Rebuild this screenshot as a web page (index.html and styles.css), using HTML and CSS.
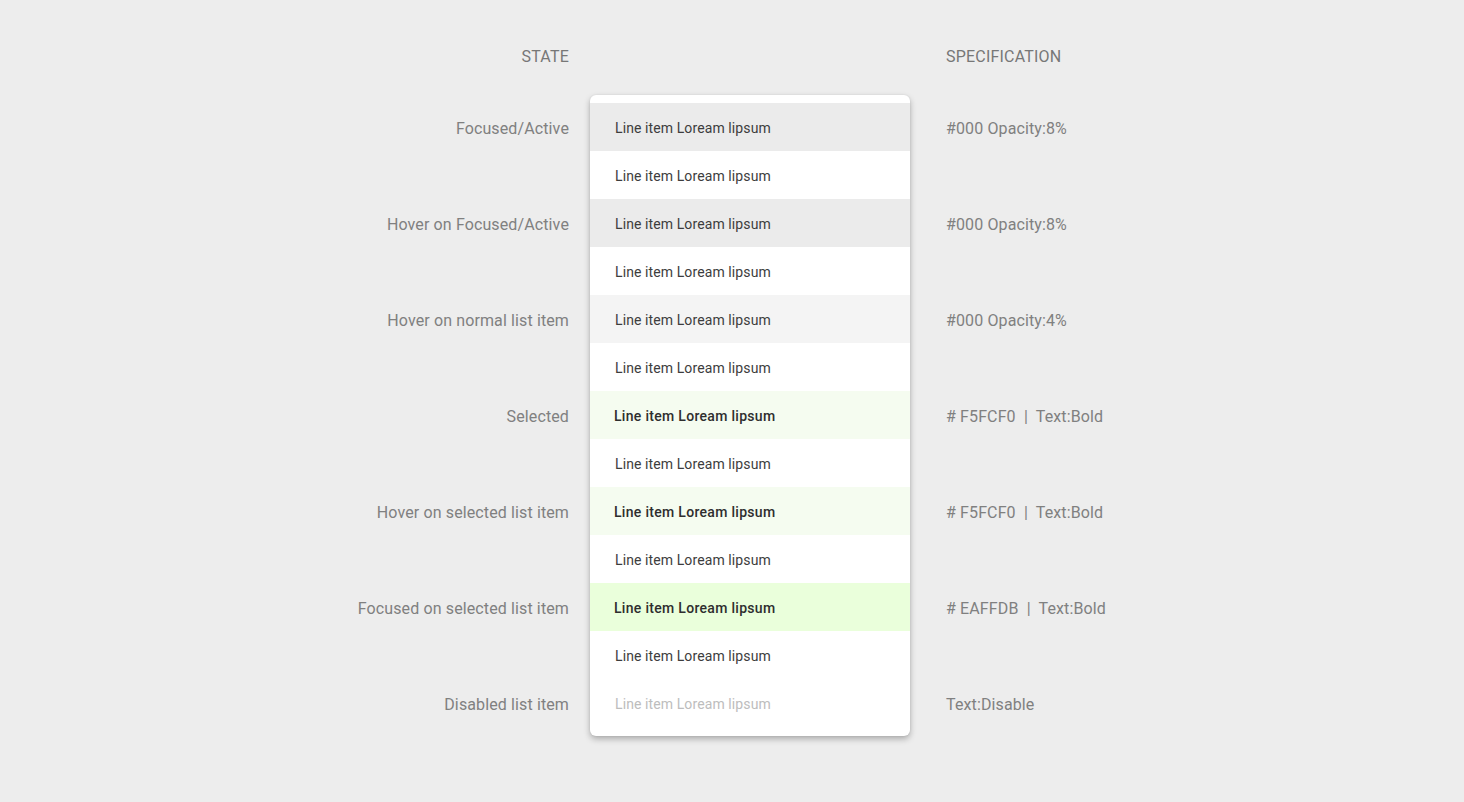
FILE: index.html
```html
<!DOCTYPE html>
<html>
<head>
<meta charset="utf-8">
<link rel="stylesheet" href="styles.css">
</head>
<body>
<div class="page">
  <div class="col col-state">
    <div class="head">STATE</div>
    <div class="labels">
      <div class="label">Focused/Active</div>
      <div class="label">Hover on Focused/Active</div>
      <div class="label">Hover on normal list item</div>
      <div class="label">Selected</div>
      <div class="label">Hover on selected list item</div>
      <div class="label">Focused on selected list item</div>
      <div class="label">Disabled list item</div>
    </div>
  </div>
  <div class="col col-menu">
    <div class="head"></div>
    <div class="menu">
      <div class="item focus">Line item Loream lipsum</div>
      <div class="item">Line item Loream lipsum</div>
      <div class="item focus">Line item Loream lipsum</div>
      <div class="item">Line item Loream lipsum</div>
      <div class="item hover">Line item Loream lipsum</div>
      <div class="item">Line item Loream lipsum</div>
      <div class="item selected">Line item Loream lipsum</div>
      <div class="item">Line item Loream lipsum</div>
      <div class="item selected">Line item Loream lipsum</div>
      <div class="item">Line item Loream lipsum</div>
      <div class="item sel-focus">Line item Loream lipsum</div>
      <div class="item">Line item Loream lipsum</div>
      <div class="item disabled">Line item Loream lipsum</div>
    </div>
  </div>
  <div class="col col-spec">
    <div class="head">SPECIFICATION</div>
    <div class="labels">
      <div class="label">#000 Opacity:8%</div>
      <div class="label">#000 Opacity:8%</div>
      <div class="label">#000 Opacity:4%</div>
      <div class="label"># F5FCF0&nbsp; |&nbsp; Text:Bold</div>
      <div class="label"># F5FCF0&nbsp; |&nbsp; Text:Bold</div>
      <div class="label"># EAFFDB&nbsp; |&nbsp; Text:Bold</div>
      <div class="label">Text:Disable</div>
    </div>
  </div>
</div>
</body>
</html>
```

FILE: styles.css
```css
html, body {
  margin: 0;
  padding: 0;
  background: #ededed;
  font-family: Roboto, "Liberation Sans", sans-serif;
}

.page {
  display: flex;
  align-items: flex-start;
  padding-top: 45px;
}

.col {
  display: flex;
  flex-direction: column;
}

.col-state {
  width: 569px;
  text-align: right;
}

.col-menu {
  width: 320px;
  margin-left: 21px;
}

.col-spec {
  margin-left: 36px;
}

.head {
  height: 24px;
  line-height: 24px;
  font-size: 16px;
  color: #777777;
  letter-spacing: 0.2px;
  margin-bottom: 26px;
}

.labels {
  padding-top: 8px;
}

.label {
  height: 96px;
  line-height: 51px;
  font-size: 16px;
  color: #808080;
  letter-spacing: 0.12px;
}

.menu {
  background: #ffffff;
  border-radius: 6px;
  padding: 8px 0 9px;
  box-shadow: 0 3px 6px rgba(0, 0, 0, 0.28), 0 0 2px rgba(0, 0, 0, 0.08);
}

.item {
  height: 48px;
  line-height: 50px;
  padding-left: 25px;
  font-size: 14px;
  color: #3d3d3d;
  letter-spacing: 0.1px;
}

.item.focus {
  background: #ebebeb;
}

.item.hover {
  background: #f4f4f4;
}

.item.selected {
  background: #f5fcf0;
  font-weight: 500;
  color: #2e2e2e;
  padding-left: 24px;
  letter-spacing: 0.3px;
}

.item.sel-focus {
  background: #eaffdb;
  font-weight: 500;
  color: #2e2e2e;
  padding-left: 24px;
  letter-spacing: 0.3px;
}

.item.disabled {
  color: #bdbdbd;
}
```
